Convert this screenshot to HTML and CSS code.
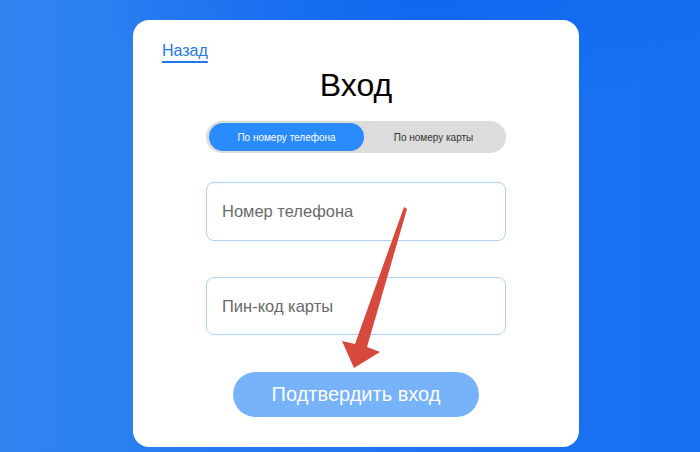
FILE: index.html
```html
<!DOCTYPE html>
<html lang="ru">
<head>
<meta charset="utf-8">
<link rel="stylesheet" href="styles.css">
</head>
<body>
<div class="page">
  <div class="card">
    <a class="back" href="#">Назад</a>
    <h1 class="title">Вход</h1>
    <div class="toggle">
      <div class="opt active">По номеру телефона</div>
      <div class="opt">По номеру карты</div>
    </div>
    <div class="field first"><input type="text" placeholder="Номер телефона"></div>
    <div class="field second"><input type="text" placeholder="Пин-код карты"></div>
    <button class="submit">Подтвердить вход</button>
  </div>
  <svg class="arrow" width="700" height="452" viewBox="0 0 700 452">
    <polygon points="404,207 407,209 367,347 380,352 354,368 342,341 355,344" fill="#d6493c"/>
  </svg>
</div>
</body>
</html>
```

FILE: styles.css
```css
html, body {
  margin: 0;
  padding: 0;
}
body {
  width: 700px;
  height: 452px;
  overflow: hidden;
  font-family: "Liberation Sans", Arial, sans-serif;
  background:
    radial-gradient(ellipse 320px 120px at 420px 0px, rgba(4, 92, 238, 0.55), rgba(4, 92, 238, 0)),
    linear-gradient(to right, #3084f0 0%, #2277f1 40%, #166ff2 100%);
}
.page {
  position: relative;
  width: 700px;
  height: 452px;
  padding-top: 20px;
  box-sizing: border-box;
}
.card {
  margin-left: 133px;
  width: 446px;
  height: 427px;
  box-sizing: border-box;
  background: #ffffff;
  border-radius: 16px;
  padding: 21px 0 0 0;
  display: flex;
  flex-direction: column;
  align-items: center;
}
.back {
  align-self: flex-start;
  margin-left: 29px;
  font-size: 16px;
  line-height: 20px;
  color: #1f7ae6;
  text-decoration: underline;
  text-decoration-thickness: 2px;
  text-underline-offset: 5px;
}
.title {
  margin: 5px 0 0 0;
  font-size: 32px;
  line-height: 38px;
  font-weight: 400;
  color: #000;
}
.toggle {
  margin-top: 17px;
  width: 300px;
  height: 32px;
  box-sizing: border-box;
  padding: 2px 3px;
  background: #dcdcdc;
  border-radius: 16px;
  display: flex;
}
.opt {
  flex: 1;
  display: flex;
  align-items: center;
  justify-content: center;
  font-size: 10px;
  color: #333;
  border-radius: 14px;
}
.opt.active {
  flex: 0 0 155px;
  background: #2a8bfd;
  color: #fff;
}
.field {
  width: 300px;
}
.field.first {
  margin-top: 29px;
}
.field.second {
  margin-top: 36px;
}
.field input {
  width: 300px;
  height: 59px;
  box-sizing: border-box;
  border: 1px solid #aed2f6;
  border-radius: 8px;
  padding: 0 15px;
  font-family: "Liberation Sans", Arial, sans-serif;
  font-size: 16.5px;
  color: #333;
  outline: none;
  background: #fff;
}
.field.second input {
  height: 58px;
}
.field input::placeholder {
  color: #6a6a6a;
}
.submit {
  margin-top: 37px;
  width: 246px;
  height: 45px;
  border: none;
  border-radius: 23px;
  background: #77b3fb;
  color: #fff;
  font-family: "Liberation Sans", Arial, sans-serif;
  font-size: 20px;
}
.arrow {
  position: absolute;
  left: 0;
  top: 0;
  pointer-events: none;
}
```
